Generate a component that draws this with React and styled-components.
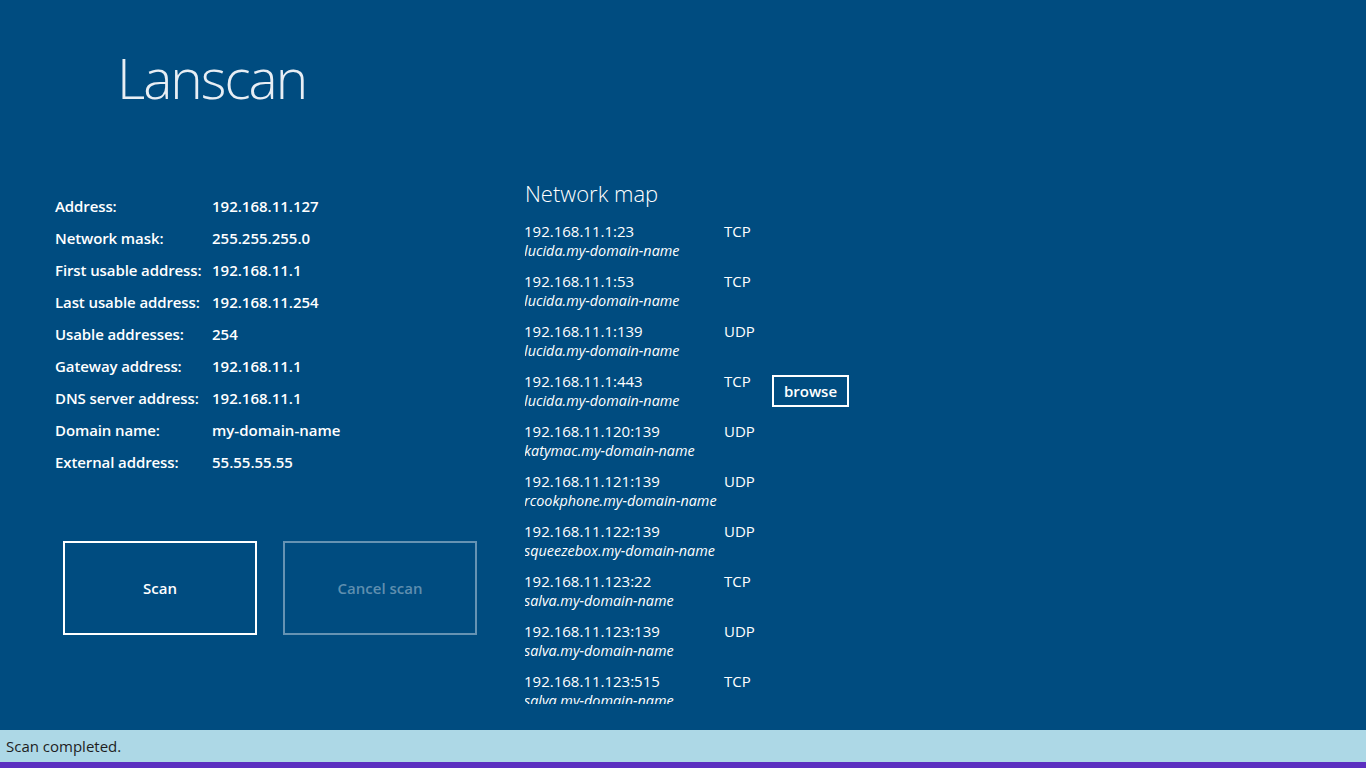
import React from 'react'
import styled, { createGlobalStyle } from 'styled-components'

const GlobalStyle = createGlobalStyle`
  html, body {
    margin: 0;
    padding: 0;
    background: #004c80;
  }
  body {
    font-family: "Open Sans", "Noto Sans", "Liberation Sans", sans-serif;
    color: #fff;
  }
`

const info = [
  ['Address:', '192.168.11.127'],
  ['Network mask:', '255.255.255.0'],
  ['First usable address:', '192.168.11.1'],
  ['Last usable address:', '192.168.11.254'],
  ['Usable addresses:', '254'],
  ['Gateway address:', '192.168.11.1'],
  ['DNS server address:', '192.168.11.1'],
  ['Domain name:', 'my-domain-name'],
  ['External address:', '55.55.55.55'],
]

const hosts = [
  { addr: '192.168.11.1:23', name: 'lucida.my-domain-name', proto: 'TCP' },
  { addr: '192.168.11.1:53', name: 'lucida.my-domain-name', proto: 'TCP' },
  { addr: '192.168.11.1:139', name: 'lucida.my-domain-name', proto: 'UDP' },
  { addr: '192.168.11.1:443', name: 'lucida.my-domain-name', proto: 'TCP', browse: true },
  { addr: '192.168.11.120:139', name: 'katymac.my-domain-name', proto: 'UDP' },
  { addr: '192.168.11.121:139', name: 'rcookphone.my-domain-name', proto: 'UDP' },
  { addr: '192.168.11.122:139', name: 'squeezebox.my-domain-name', proto: 'UDP' },
  { addr: '192.168.11.123:22', name: 'salva.my-domain-name', proto: 'TCP' },
  { addr: '192.168.11.123:139', name: 'salva.my-domain-name', proto: 'UDP' },
  { addr: '192.168.11.123:515', name: 'salva.my-domain-name', proto: 'TCP' },
]

export default function App() {
  return (
    <Page>
      <GlobalStyle />
      <Main>
        <Title>Lanscan</Title>
        <Body>
          <Left>
            <InfoTable>
              {info.map(([label, value]) => (
                <React.Fragment key={label}>
                  <Label>{label}</Label>
                  <Value>{value}</Value>
                </React.Fragment>
              ))}
            </InfoTable>
            <Buttons>
              <BigButton>Scan</BigButton>
              <BigButton disabled>Cancel scan</BigButton>
            </Buttons>
          </Left>
          <Right>
            <MapTitle>Network map</MapTitle>
            <HostList>
              {hosts.map((h) => (
                <Host key={h.addr}>
                  <HostText>
                    <Addr>{h.addr}</Addr>
                    <HostName>{h.name}</HostName>
                  </HostText>
                  <Proto>{h.proto}</Proto>
                  {h.browse && <Browse>browse</Browse>}
                </Host>
              ))}
            </HostList>
          </Right>
        </Body>
      </Main>
      <Status>Scan completed.</Status>
      <Strip />
    </Page>
  )
}

const Page = styled.div`
  width: 1366px;
  height: 768px;
  display: flex;
  flex-direction: column;
  background: #004c80;
  overflow: hidden;
`

const Main = styled.div`
  height: 730px;
  display: flex;
  flex-direction: column;
`

const Title = styled.h1`
  margin: 0;
  padding: 42px 0 0 117px;
  height: 136px;
  box-sizing: border-box;
  font-size: 55px;
  font-weight: 300;
  letter-spacing: -2px;
  line-height: 72px;
  color: #e8eef4;
`

const Body = styled.div`
  display: grid;
  grid-template-columns: 470px 1fr;
  padding-left: 55px;
  padding-top: 42px;
`

const Left = styled.div`
  display: flex;
  flex-direction: column;
  padding-top: 12px;
`

const InfoTable = styled.div`
  display: grid;
  grid-template-columns: 157px auto;
  grid-auto-rows: 32px;
  align-items: center;
  font-size: 15px;
  font-weight: 600;
`

const Label = styled.div`
  white-space: nowrap;
  letter-spacing: -0.1px;
`

const Value = styled.div``

const Buttons = styled.div`
  display: flex;
  gap: 26px;
  margin: 63px 0 0 8px;
`

const BigButton = styled.button`
  width: 194px;
  height: 94px;
  box-sizing: border-box;
  background: transparent;
  border: 2px solid ${(p) => (p.disabled ? 'rgba(255,255,255,0.4)' : '#fff')};
  color: ${(p) => (p.disabled ? 'rgba(255,255,255,0.38)' : '#fff')};
  font-family: inherit;
  font-size: 15px;
  font-weight: 600;
  padding: 0;
`

const Right = styled.div`
  display: flex;
  flex-direction: column;
`

const MapTitle = styled.h2`
  margin: 0;
  font-size: 22px;
  font-weight: 300;
  line-height: 30px;
`

const HostList = styled.div`
  margin-top: 13px;
  height: 483px;
  overflow: hidden;
`

const Host = styled.div`
  display: flex;
  align-items: flex-start;
  height: 50px;
  margin-left: -1px;
`

const HostText = styled.div`
  width: 200px;
`

const Addr = styled.div`
  font-size: 15px;
  line-height: 20px;
`

const HostName = styled.div`
  font-size: 14.4px;
  line-height: 20px;
  font-style: italic;
  white-space: nowrap;
`

const Proto = styled.div`
  width: 48px;
  font-size: 15px;
  line-height: 20px;
`

const Browse = styled.button`
  margin-top: 4px;
  width: 77px;
  height: 32px;
  box-sizing: border-box;
  background: transparent;
  border: 2px solid #fff;
  color: #fff;
  font-family: inherit;
  font-size: 15px;
  font-weight: 600;
  padding: 0;
`

const Status = styled.div`
  height: 32px;
  background: #add8e6;
  color: #1e1e1e;
  font-size: 15px;
  line-height: 32px;
  padding-left: 6px;
`

const Strip = styled.div`
  height: 6px;
  background: #5b2fc0;
`
